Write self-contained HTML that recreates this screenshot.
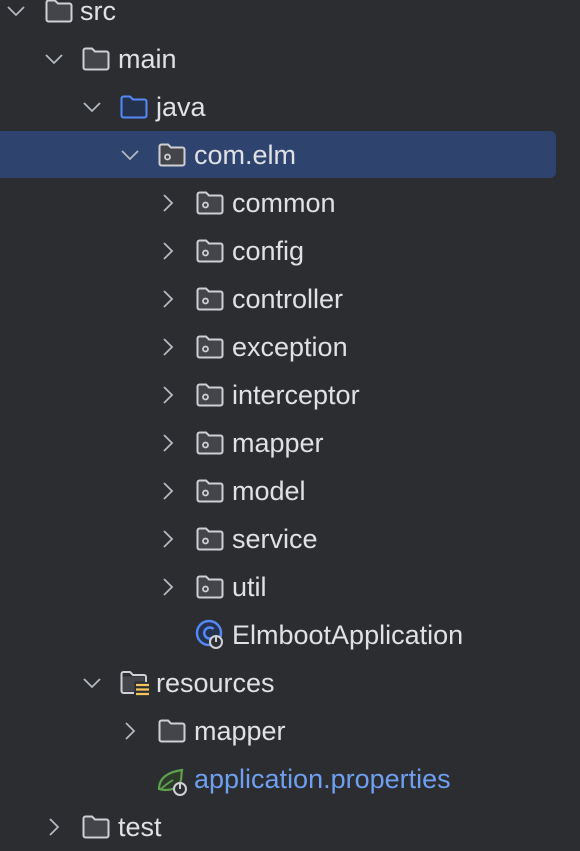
<!DOCTYPE html>
<html><head><meta charset="utf-8"><style>
body{margin:0;width:580px;height:846px;background:#2b2d30;overflow:hidden;position:relative;font-family:"Liberation Sans",sans-serif;}
.hl{position:absolute;left:0;top:131px;width:556px;height:47px;background:#2e436e;border-radius:0 6px 6px 0}
.r{position:absolute;height:48px;line-height:48px;font-size:27px;color:#dfe1e5;white-space:nowrap}
svg{position:absolute}
</style></head><body>
<div class="hl"></div>
<svg width="0" height="0"><defs>
<symbol id="f" viewBox="0 0 28 24"><path d="M1.5 3.5a2 2 0 0 1 2-2h6.5l3 3h11.5a2 2 0 0 1 2 2v14a2 2 0 0 1-2 2h-21a2 2 0 0 1-2-2z" fill="#43454a" stroke="#ced0d6" stroke-width="2"/></symbol>
<symbol id="p" viewBox="0 0 28 24"><path d="M1.5 3.5a2 2 0 0 1 2-2h6.5l3 3h11.5a2 2 0 0 1 2 2v14a2 2 0 0 1-2 2h-21a2 2 0 0 1-2-2z" fill="#43454a" stroke="#ced0d6" stroke-width="2"/><circle cx="9.5" cy="14" r="2.5" fill="none" stroke="#ced0d6" stroke-width="1.8"/></symbol>
<symbol id="cd" viewBox="0 0 20 20"><path d="M2 6l8 8 8-8" fill="none" stroke="#b4b8bf" stroke-width="1.8"/></symbol>
<symbol id="cr" viewBox="0 0 20 20"><path d="M6 2l8 8-8 8" fill="none" stroke="#b4b8bf" stroke-width="1.8"/></symbol>
</defs></svg>

<svg style="left:6px;top:1px" width="20" height="20"><use href="#cd" width="20" height="20"/></svg>
<svg style="left:45px;top:-1px" width="28" height="24"><use href="#f" width="28" height="24"/></svg>
<div class="r" style="left:80px;top:-13px">src</div>

<svg style="left:44px;top:49px" width="20" height="20"><use href="#cd" width="20" height="20"/></svg>
<svg style="left:82px;top:47px" width="28" height="24"><use href="#f" width="28" height="24"/></svg>
<div class="r" style="left:118px;top:35px">main</div>

<svg style="left:82px;top:97px" width="20" height="20"><use href="#cd" width="20" height="20"/></svg>
<svg style="left:120px;top:95px" width="28" height="24" viewBox="0 0 28 24"><path d="M1.5 3.5a2 2 0 0 1 2-2h6.5l3 3h11.5a2 2 0 0 1 2 2v14a2 2 0 0 1-2 2h-21a2 2 0 0 1-2-2z" fill="#25324d" stroke="#548af7" stroke-width="2"/></svg>
<div class="r" style="left:156px;top:83px">java</div>

<svg style="left:120px;top:145px" width="20" height="20"><use href="#cd" width="20" height="20"/></svg>
<svg style="left:158px;top:143px" width="28" height="24"><use href="#p" width="28" height="24"/></svg>
<div class="r" style="left:194px;top:131px">com.elm</div>

<svg style="left:158px;top:193px" width="20" height="20"><use href="#cr" width="20" height="20"/></svg><svg style="left:196px;top:191px" width="28" height="24"><use href="#p" width="28" height="24"/></svg><div class="r" style="left:232px;top:179px">common</div>
<svg style="left:158px;top:241px" width="20" height="20"><use href="#cr" width="20" height="20"/></svg><svg style="left:196px;top:239px" width="28" height="24"><use href="#p" width="28" height="24"/></svg><div class="r" style="left:232px;top:227px">config</div>
<svg style="left:158px;top:289px" width="20" height="20"><use href="#cr" width="20" height="20"/></svg><svg style="left:196px;top:287px" width="28" height="24"><use href="#p" width="28" height="24"/></svg><div class="r" style="left:232px;top:275px">controller</div>
<svg style="left:158px;top:337px" width="20" height="20"><use href="#cr" width="20" height="20"/></svg><svg style="left:196px;top:335px" width="28" height="24"><use href="#p" width="28" height="24"/></svg><div class="r" style="left:232px;top:323px">exception</div>
<svg style="left:158px;top:385px" width="20" height="20"><use href="#cr" width="20" height="20"/></svg><svg style="left:196px;top:383px" width="28" height="24"><use href="#p" width="28" height="24"/></svg><div class="r" style="left:232px;top:371px">interceptor</div>
<svg style="left:158px;top:433px" width="20" height="20"><use href="#cr" width="20" height="20"/></svg><svg style="left:196px;top:431px" width="28" height="24"><use href="#p" width="28" height="24"/></svg><div class="r" style="left:232px;top:419px">mapper</div>
<svg style="left:158px;top:481px" width="20" height="20"><use href="#cr" width="20" height="20"/></svg><svg style="left:196px;top:479px" width="28" height="24"><use href="#p" width="28" height="24"/></svg><div class="r" style="left:232px;top:467px">model</div>
<svg style="left:158px;top:529px" width="20" height="20"><use href="#cr" width="20" height="20"/></svg><svg style="left:196px;top:527px" width="28" height="24"><use href="#p" width="28" height="24"/></svg><div class="r" style="left:232px;top:515px">service</div>
<svg style="left:158px;top:577px" width="20" height="20"><use href="#cr" width="20" height="20"/></svg><svg style="left:196px;top:575px" width="28" height="24"><use href="#p" width="28" height="24"/></svg><div class="r" style="left:232px;top:563px">util</div>

<svg style="left:195px;top:619px" width="34" height="32" viewBox="0 0 34 32"><circle cx="14" cy="14" r="12" fill="#25324d" stroke="#548af7" stroke-width="2.4"/><path d="M18.5 10a5.5 5.5 0 1 0 0 8" fill="none" stroke="#548af7" stroke-width="2.4"/><circle cx="21" cy="23" r="6" fill="#2b2d30" stroke="#ced0d6" stroke-width="2"/><path d="M21 18v5" stroke="#ced0d6" stroke-width="2"/></svg>
<div class="r" style="left:232px;top:611px">ElmbootApplication</div>

<svg style="left:82px;top:673px" width="20" height="20"><use href="#cd" width="20" height="20"/></svg>
<svg style="left:119px;top:670px" width="34" height="30" viewBox="0 0 34 30"><path d="M3.5 6.5h22v5h-10v10h-12z" fill="#43454a"/><path d="M2.5 4a2 2 0 0 1 2-2h6.5l3 3h11a2 2 0 0 1 2 2v5" fill="none" stroke="#ced0d6" stroke-width="2"/><path d="M2.5 4v17a2 2 0 0 0 2 2H15" fill="none" stroke="#ced0d6" stroke-width="2"/><path d="M17 15h13M17 19.5h13M17 24h13" stroke="#f2c55c" stroke-width="2.2"/></svg>
<div class="r" style="left:156px;top:659px">resources</div>

<svg style="left:120px;top:721px" width="20" height="20"><use href="#cr" width="20" height="20"/></svg>
<svg style="left:158px;top:719px" width="28" height="24"><use href="#f" width="28" height="24"/></svg>
<div class="r" style="left:194px;top:707px">mapper</div>

<svg style="left:157px;top:763px" width="34" height="34" viewBox="0 0 34 34"><path d="M2 26c0-11 9-17 23-19-1 5 0 9-2 13-3 6-10 7-15 7-3 0-6-1-6-1z" fill="#2d3a2a" stroke="#5fa04e" stroke-width="2.2"/><path d="M3 27c4-4 8-7 13-10" fill="none" stroke="#5fa04e" stroke-width="1.8"/><circle cx="23" cy="26" r="6" fill="#2b2d30" stroke="#ced0d6" stroke-width="2"/><path d="M23 21v5" stroke="#ced0d6" stroke-width="2"/></svg>
<div class="r" style="left:194px;top:755px;color:#6f9ff0">application.properties</div>

<svg style="left:44px;top:817px" width="20" height="20"><use href="#cr" width="20" height="20"/></svg>
<svg style="left:82px;top:815px" width="28" height="24"><use href="#f" width="28" height="24"/></svg>
<div class="r" style="left:118px;top:803px">test</div>
</body></html>
